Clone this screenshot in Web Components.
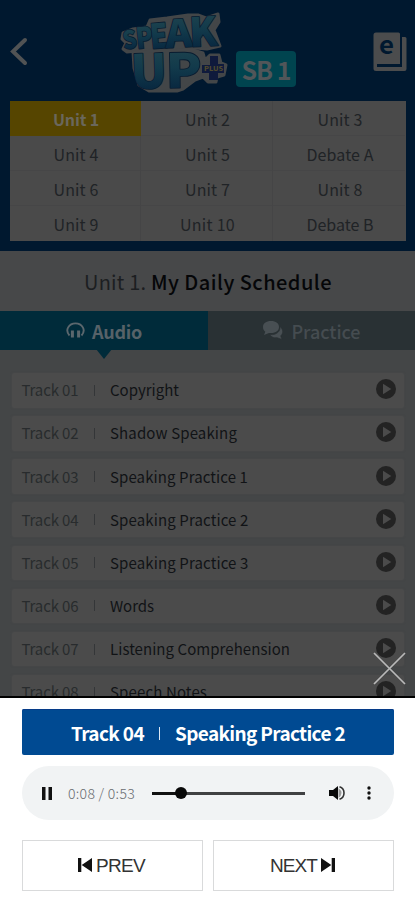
<!DOCTYPE html>
<html lang="en">
<head>
<meta charset="utf-8">
<meta name="viewport" content="width=device-width">
<title>Speak Up Plus</title>
<style>
html,body{margin:0;height:100%;overflow:hidden}
body{font-family:"Noto Sans CJK KR","Noto Sans",sans-serif;background:#444647}
</style>
</head>
<body>
<su-app></su-app>
<script>
const define = (name, render, after) => customElements.define(name, class extends HTMLElement {
  connectedCallback() {
    if (this.shadowRoot) return;
    const t = document.createElement('template');
    t.innerHTML = render(this);
    this.attachShadow({mode: 'open'}).append(t.content.cloneNode(true));
    if (after) after(this);
  }
});

/* Spreads its letters so that the line takes the width given in "w". */
define('fit-text', () => `<style>:host{display:inline-block;white-space:pre;line-height:1}</style><slot></slot>`, el => {
  const w = +el.getAttribute('w'), n = el.textContent.length;
  const s = (w - el.getBoundingClientRect().width) / n;
  el.style.letterSpacing = s.toFixed(3) + 'px';
});

define('su-logo', () => `<style>:host{display:block;width:112px;height:86px}svg{display:block;overflow:visible}
text{font-family:"Noto Sans CJK KR",sans-serif;font-weight:900;stroke-linejoin:round}</style>
<svg width="112" height="86" viewBox="0 0 112 86">
<defs><linearGradient id="g" x1="0" y1=".15" x2="0" y2=".85"><stop offset="0" stop-color="#20454f"/><stop offset=".5" stop-color="#123a4b"/><stop offset="1" stop-color="#07263f"/></linearGradient></defs>
<g fill="#434648" stroke="#434648" stroke-width="3" stroke-linejoin="round">
<path d="M4 23 14 19 28 17 31 10 48 8 69 5 79 5 87 8 99 4 100 12 95 20 101 36 88 39 76 38 52 41 28 40 8 42 4 39 7 33 3 29Z"/>
<path d="M14 42 74 40 84 43 86 50 91 45 100 45 102 53 107 55 105 65 98 67 97 72 89 72 84 67 76 70 64 79 58 81 45 81 30 81 20 75 15 58Z"/></g>
<g fill="url(#g)" stroke="#081c30" stroke-width="1.6" paint-order="stroke">
<text font-size="25" transform="translate(5 39.500) rotate(-8)" textLength="14" lengthAdjust="spacingAndGlyphs">S</text>
<text font-size="29" transform="translate(18 39) rotate(-6)" textLength="17" lengthAdjust="spacingAndGlyphs">P</text>
<text font-size="34" transform="translate(32 39) rotate(-5)" textLength="18" lengthAdjust="spacingAndGlyphs">E</text>
<text font-size="38" transform="translate(47 38) rotate(-3)" textLength="27" lengthAdjust="spacingAndGlyphs">A</text>
<text font-size="40" transform="translate(71 37) rotate(-3)" textLength="28" lengthAdjust="spacingAndGlyphs">K</text>
<text font-size="47" transform="translate(12.500 79) rotate(-2)" textLength="36" lengthAdjust="spacingAndGlyphs">U</text>
<text font-size="47" transform="translate(47 78) rotate(-1)" textLength="36" lengthAdjust="spacingAndGlyphs">P</text></g>
<path d="M91 46h8v8h6v9h-6v7h-9v-7h-7v-8h8z" fill="#0f1a3c"/>
<text x="85" y="60.500" font-size="6" fill="#4f4a2e" textLength="19" lengthAdjust="spacingAndGlyphs">PLUS</text>
</svg>`);

define('su-header', () => `<style>
:host{display:block;height:101px;background:#00182f;color:#515659}
.bar{display:grid;grid-template-columns:119px 112px 5px 60px 1fr;height:101px;align-items:start;box-sizing:border-box}
.back{padding:37px 0 0 10px}su-logo{margin-top:10px}
.badge{grid-column:4;margin-top:51px;width:60px;height:36px;border-radius:4px;background:#00444f;display:flex;align-items:center;justify-content:center;font:700 25px "Noto Sans CJK KR",sans-serif}
.book{justify-self:end;margin:32px 8px 0 0}svg{display:block;overflow:visible}
svg text{font:700 24px "Noto Sans CJK KR",sans-serif}
</style><div class="bar">
<div class="back"><svg width="18" height="29"><path d="M15 3 3 14.500 15 26" fill="none" stroke="#515354" stroke-width="4" stroke-linecap="round"/></svg></div>
<su-logo></su-logo><div class="badge"><fit-text w="49">SB 1</fit-text></div>
<div class="book"><svg width="34" height="40"><path d="M29 5h3q1.500 0 1.500 1.500V37q0 2-2 2H3q-2.500 0-2.500-2.500V3Q.500.500 3 .500H25.500Q27 .500 27 2V32H4v3H29Z" fill="#4b4c4d"/><text x="6" y="21.500" textLength="15" lengthAdjust="spacingAndGlyphs" fill="#00182f">e</text></svg></div></div>`);

define('su-units', () => {
  const u = [['Unit 1',46],['Unit 2',45],['Unit 3',45],['Unit 4',45],['Unit 5',45],['Debate A',67],['Unit 6',45],['Unit 7',45],['Unit 8',45],['Unit 9',45],['Unit 10',55],['Debate B',67]];
  return `<style>:host{display:block;background:#00182f;padding:0 9.500px 10px 10px}
.grid{display:grid;grid-template-columns:131px 132px 132px;grid-template-rows:repeat(4,35px);background:#4a4a4a}
.c{display:flex;align-items:center;justify-content:center;box-sizing:border-box;border-right:1px solid #454546;border-bottom:1px solid #464647;font-size:16px;color:#202326;padding:1px 0 0 2px}
.c:nth-child(3n){border-right:0}.c:nth-last-child(-n+3){border-bottom:0}
.on{background:#564500;color:#6a675c;font-weight:700;border-color:#564500}</style>
<div class="grid">${u.map(([t,w],i)=>`<div class="c${i?'':' on'}"><fit-text w="${w}">${t}</fit-text></div>`).join('')}</div>`;
});

define('su-title', () => `<style>:host{display:flex;height:60px;background:#474849;align-items:center;justify-content:center;font-size:20px;color:#1c1e21;padding:1px 0 0 1px;box-sizing:border-box}
b{font-weight:500;color:#050608}</style><fit-text w="67">Unit 1. </fit-text><b><fit-text w="181">My Daily Schedule</fit-text></b>`);

define('su-tabs', () => `<style>:host{display:grid;grid-template-columns:208px 1fr;height:39px;font-size:18px;font-weight:700}
div{display:flex;align-items:center;justify-content:center}fit-text{margin-top:1px}svg{display:block}
.a{background:#002b3a;color:#576268;position:relative;gap:7px}.a:after{content:"";position:absolute;left:96px;top:38px;border:8px solid transparent;border-top:10px solid #002b3a;border-bottom:0}
.p{background:#293134;color:#454c50;gap:9px;font-weight:500}</style>
<div class="a"><svg width="19" height="17" fill="none" stroke="#5b676d" stroke-width="1.900"><path d="M3.500 13.500C-1.500 8 3 1.400 9.500 1.400S20.500 8 15.500 13.500"/><path d="M6.400 8.500v7M12.600 8.500v7" stroke-width="3" /></svg><fit-text w="50">Audio</fit-text></div>
<div class="p"><svg width="20" height="19"><g fill="#484f53"><path d="M8 0c5 0 8 2.500 8 6s-3 6-8 6l-2 0-5 2 1.300-3.200C.8 9.500 0 8 0 6 0 2.500 3 0 8 0Z"/><path d="M17 5.500c3.500 3 3.500 7 .7 9.400L19 18.500l-5-1.800c-3 .5-5.500-.5-7.300-3 7 .5 11-3.500 10.300-8.200Z" stroke="#293134" stroke-width=".7"/></g></svg><fit-text w="69">Practice</fit-text></div>`);

define('su-track', el => `<style>:host{display:flex;align-items:center;height:34.500px;background:#4b4b4b;border-radius:2px;font-size:15px;color:#111316;padding:0 8px 0 9.500px;box-sizing:border-box;box-shadow:0 0 2px #484949}
.n{display:block;width:71.500px;color:#282b2d;line-height:20px}i{width:1px;height:11px;background:#343638;margin:0 15px 0 1px}.t{line-height:20px}svg{margin:-2px 0 0 auto;display:block}</style>
<span class="n"><fit-text w="57">Track ${el.getAttribute('no')}</fit-text></span><i></i><span class="t"><fit-text w="${el.getAttribute('w')}">${el.getAttribute('name')}</fit-text></span>
<svg width="20" height="20"><circle cx="10" cy="10" r="10" fill="#232323"/><path d="M7 4.800 15.300 10 7 15.200Z" fill="#4b4b4b"/></svg>`);

define('su-tracks', () => {
  const t = [['Copyright',69],['Shadow Speaking',127],['Speaking Practice 1',138],['Speaking Practice 2',138.500],['Speaking Practice 3',138.500],['Words',44],['Listening Comprehension',180],['Speech Notes',97]];
  return `<style>:host{display:flex;flex-direction:column;gap:8.650px;padding:23px 11px 0 12px;height:346px;box-sizing:border-box;overflow:hidden;background:#444647}su-track{flex:none}</style>${t.map(([n,w],i)=>`<su-track no="0${i+1}" name="${n}" w="${w}"></su-track>`).join('')}`;
});

define('su-audio', () => `<style>:host{display:flex;height:54px;border-radius:27px;background:#f1f3f4;align-items:center;box-sizing:border-box;padding:0 23px 0 19px;font-size:14px;color:#686b6f}
.t{margin-left:15px;width:84px;margin-top:-1px;font-weight:300}.line{width:153px;height:3px;background:linear-gradient(90deg,#111 29px,#404142 29px);display:flex;align-items:center}.line:before{content:"";width:12px;height:12px;border-radius:50%;background:#080808;margin-left:23px}svg{display:block}.v{margin:0 21px 0 24px}</style>
<svg width="12" height="13" fill="#111"><path d="M1 0h3.500v13H1zM7.500 0H11v13H7.500z"/></svg><span class="t"><fit-text w="67">0:08 / 0:53</fit-text></span><span class="line"></span>
<svg class="v" width="17" height="16"><path d="M0 5h4l5-4v14L4 11H0z" fill="#080808"/><path d="M9.500 3q6 5 0 10z" fill="#999"/><path d="M10.500 1.700c6 2 6 10.600 0 12.600" fill="none" stroke="#333" stroke-width="1.600"/></svg>
<svg width="4" height="14" fill="#111"><circle cx="2" cy="2" r="1.700"/><circle cx="2" cy="7" r="1.700"/><circle cx="2" cy="12" r="1.700"/></svg>`);

define('su-step', el => {
  const next = el.hasAttribute('next'), icon = `<svg width="14" height="14"><path fill="#111" ${next?'transform="matrix(-1 0 0 1 14 0)"':''} d="M0 0h3.300v14H0zM14 0v14L3.700 7z"/></svg>`;
  return `<style>:host{display:flex;box-sizing:border-box;height:51px;border:1px solid #d9dadb;align-items:center;justify-content:center;gap:4px;font:19px "Liberation Sans",Arial,sans-serif;color:#333;background:#fff;padding-right:2px}svg{display:block;margin-top:-2px}</style>${next?'':icon}<fit-text w="${next?47:49}">${next?'NEXT':'PREV'}</fit-text>${next?icon:''}`;
});

define('su-player', () => `<style>:host{display:block;position:relative;height:204px;box-sizing:border-box;background:#fff;border-top:2px solid #000;padding:11px 21px 0 22px}
.now{height:46px;border-radius:2px;background:#004a92;box-shadow:inset 0 1px #063b88;color:#fff;font-size:19px;font-weight:700;display:flex;align-items:center;justify-content:center}
.now fit-text{margin-top:1px}i{width:1px;height:13px;background:#dce8f5;margin:2px 15px 0}su-audio{margin:11px 0 20px}.b{display:grid;grid-template-columns:181px 181px;justify-content:space-between}
.x{position:absolute;left:373px;top:-46px;display:block}</style>
<svg class="x" width="33" height="33"><path d="M1 1 32 32M32 1 1 32" stroke="#b9b9b9" stroke-width="1.700"/></svg>
<div class="now"><fit-text w="73">Track 04</fit-text><i></i><fit-text w="170">Speaking Practice 2</fit-text></div><su-audio></su-audio><div class="b"><su-step></su-step><su-step next></su-step></div>`);

define('su-app', () => `<style>:host{display:block;width:415px;height:900px;overflow:hidden;font-family:"Noto Sans CJK KR","Noto Sans",sans-serif}</style>
<su-header></su-header><su-units></su-units><su-title></su-title><su-tabs></su-tabs><su-tracks></su-tracks><su-player></su-player>`);
</script>
</body>
</html>
